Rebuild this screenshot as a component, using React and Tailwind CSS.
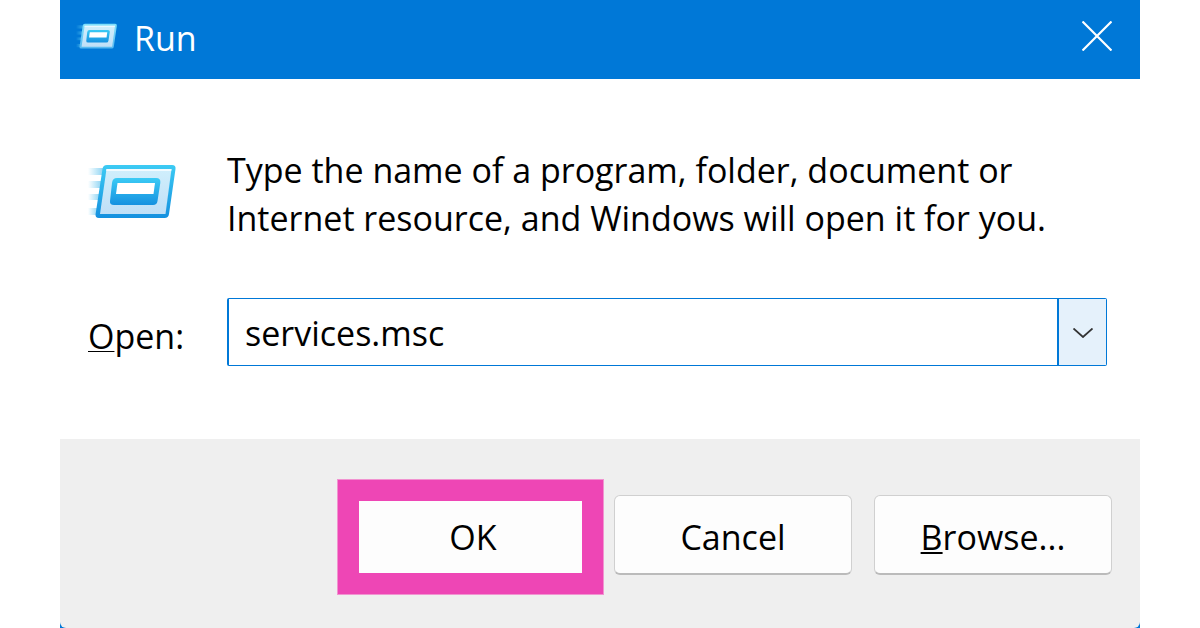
import { useState } from 'react';

function RunIcon({ id, light, className }) {
  return (
    <svg viewBox="0 0 90 56" className={className} aria-hidden="true">
      <defs>
        <linearGradient id={`${id}-frame`} x1="0" y1="0" x2="0" y2="1">
          <stop offset="0" stopColor={light ? '#7fe0fb' : '#3ccbf4'} />
          <stop offset="1" stopColor={light ? '#55b8f0' : '#1490df'} />
        </linearGradient>
        <linearGradient id={`${id}-panel`} x1="0" y1="0" x2="0" y2="1">
          <stop offset="0" stopColor="#d0effc" />
          <stop offset="1" stopColor="#bfdff7" />
        </linearGradient>
        <linearGradient id={`${id}-inner`} x1="0" y1="0" x2="0" y2="1">
          <stop offset="0" stopColor="#3bcbf5" />
          <stop offset="1" stopColor="#1591e0" />
        </linearGradient>
        <linearGradient id={`${id}-trail`} x1="0" y1="0" x2="1" y2="0">
          <stop offset="0" stopColor="#4fc3f0" stopOpacity="0" />
          <stop offset="1" stopColor="#4fb8ea" stopOpacity="0.75" />
        </linearGradient>
      </defs>
      {/* speed lines */}
      <rect x="0" y="5" width="18" height="7" fill={`url(#${id}-trail)`} />
      <rect x="0" y="18" width="16" height="7" fill={`url(#${id}-trail)`} />
      <rect x="0" y="31" width="14" height="6" fill={`url(#${id}-trail)`} />
      <rect x="0" y="45" width="12" height="7" fill={`url(#${id}-trail)`} />
      <path
        d="M19 2H84Q88 2 87.500 6L81 51Q80.500 55 76.500 55H11Q7 55 7.600 51L14.500 6Q15 2 19 2Z"
        fill={`url(#${id}-frame)`}
      />
      <path d="M18.500 6H83.500L77.500 51H12Z" fill={`url(#${id}-panel)`} />
      <path d="M18.500 6H83.500L83.200 8H18.200Z" fill="#f2fbff" />
      <path
        d="M29 15H68Q73 15 72.300 20L69.500 38Q69 42 65 42H26Q21.500 42 22 38L24 20Q24.500 15 29 15Z"
        fill={`url(#${id}-inner)`}
      />
      <path d="M29.500 20H67L65.500 31H28Z" fill="#ffffff" />
    </svg>
  );
}

function DialogButton({ children, onClick }) {
  return (
    <button
      type="button"
      onClick={onClick}
      className="h-20 w-[238px] rounded-md border border-b-2 border-[#d0d0d0] border-b-[#bbbbbb] bg-[#fdfdfd] pt-1"
    >
      {children}
    </button>
  );
}

export default function App() {
  const [command, setCommand] = useState('services.msc');

  return (
    <div className="min-h-screen bg-white px-[5%] font-['Open_Sans',sans-serif] text-[34px] leading-[48px] text-black">
      <div className="bg-[#0078d7]">
        <header className="flex h-[79px] items-center pr-7 pb-1 pl-4 text-white">
          <RunIcon id="title" light className="mb-1 h-7 w-[42px]" />
          <h1 className="ml-4">Run</h1>
          <button type="button" aria-label="Close" className="mb-1 ml-auto">
            <svg viewBox="0 0 30 30" className="size-[30px]" aria-hidden="true">
              <path
                d="M0.500 0.500L29.500 29.500M29.500 0.500L0.500 29.500"
                stroke="#ffffff"
                strokeWidth="2.200"
              />
            </svg>
          </button>
        </header>

        <main className="bg-white pt-[67px] pr-[33px] pb-[73px] pl-7">
          <div className="flex">
            <div className="w-[139px] shrink-0 pt-[17px]">
              <RunIcon id="body" className="h-14 w-[90px]" />
            </div>
            <p>
              Type the name of a program, folder, document or
              <br />
              Internet resource, and Windows will open it for you.
            </p>
          </div>

          <div className="mt-14 flex items-center">
            <label htmlFor="command" className="w-[139px] shrink-0 pt-2">
              <span className="underline decoration-1 underline-offset-2">O</span>
              pen:
            </label>
            <div className="flex h-[68px] min-w-0 flex-1 rounded-xs border border-l-2 border-[#0078d7]">
              <input
                id="command"
                type="text"
                value={command}
                onChange={(e) => setCommand(e.target.value)}
                className="min-w-0 flex-1 px-4 pt-0.5 outline-none"
              />
              <button
                type="button"
                aria-label="Show history"
                className="flex w-[49px] items-center justify-center border-l-2 border-[#0078d7] bg-[#e5f1fb] pt-0.5"
              >
                <svg viewBox="0 0 20 10" className="h-[10px] w-5" aria-hidden="true">
                  <path
                    d="M0.500 0.500L10 9L19.500 0.500"
                    fill="none"
                    stroke="#333333"
                    strokeWidth="1.800"
                  />
                </svg>
              </button>
            </div>
          </div>
        </main>

        <footer className="flex justify-end gap-[22px] rounded-b-md bg-[#efefef] pt-14 pr-7 pb-[53px]">
          <div className="relative">
            <DialogButton>OK</DialogButton>
            {/* highlight frame */}
            <div className="pointer-events-none absolute -top-4 -right-3 -bottom-5 -left-[17px] border-[22px] border-[#ee46b5] outline -outline-offset-1 outline-[#f193d0]" />
          </div>
          <DialogButton onClick={() => setCommand('')}>Cancel</DialogButton>
          <DialogButton>
            <span className="underline decoration-2 underline-offset-2">B</span>
            rowse...
          </DialogButton>
        </footer>
      </div>
    </div>
  );
}
